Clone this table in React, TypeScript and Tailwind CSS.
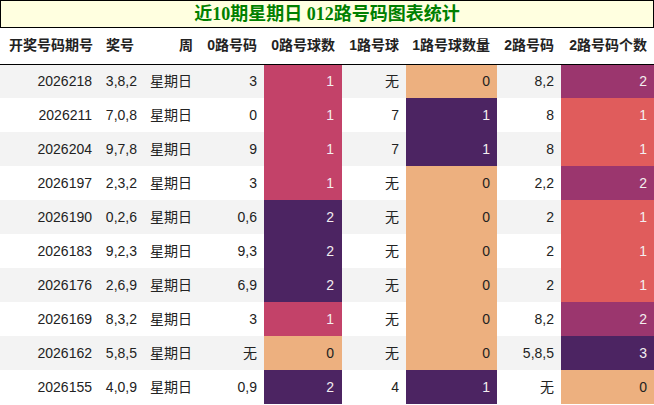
import React from 'react';

const C: Record<number, string> = {
  0: 'bg-[#edb07f] text-[#222]',
  1: 'bg-[#c34269] text-[#f3eef0]',
  2: 'bg-[#4c2462] text-[#f3eef0]',
  3: 'bg-[#4c2462] text-[#f3eef0]',
};
// 2路号码个数 uses a slightly different palette
const C2: Record<number, string> = {
  0: 'bg-[#edb07f] text-[#222]',
  1: 'bg-[#e05c5c] text-[#f3eef0]',
  2: 'bg-[#9b366e] text-[#f3eef0]',
  3: 'bg-[#4c2462] text-[#f3eef0]',
};
const C1: Record<number, string> = {
  0: 'bg-[#edb07f] text-[#222]',
  1: 'bg-[#4c2462] text-[#f3eef0]',
};

const rows: [string, string, string, string, number, string, number, string, number][] = [
  ['2026218', '3,8,2', '星期日', '3', 1, '无', 0, '8,2', 2],
  ['2026211', '7,0,8', '星期日', '0', 1, '7', 1, '8', 1],
  ['2026204', '9,7,8', '星期日', '9', 1, '7', 1, '8', 1],
  ['2026197', '2,3,2', '星期日', '3', 1, '无', 0, '2,2', 2],
  ['2026190', '0,2,6', '星期日', '0,6', 2, '无', 0, '2', 1],
  ['2026183', '9,2,3', '星期日', '9,3', 2, '无', 0, '2', 1],
  ['2026176', '2,6,9', '星期日', '6,9', 2, '无', 0, '2', 1],
  ['2026169', '8,3,2', '星期日', '3', 1, '无', 0, '8,2', 2],
  ['2026162', '5,8,5', '星期日', '无', 0, '无', 0, '5,8,5', 3],
  ['2026155', '4,0,9', '星期日', '0,9', 2, '4', 1, '无', 0],
];

const heads = ['开奖号码期号', '奖号', '周', '0路号码', '0路号球数', '1路号球', '1路号球数量', '2路号码', '2路号码个数'];
const widths = ['w-[100px]', 'w-[41px]', 'w-[59px]', 'w-[64px]', 'w-[78px]', 'w-[64px]', 'w-[91px]', 'w-[64px]', 'w-[93px]'];

export default function App() {
  return (
    <div className="w-[654px] h-[405px] bg-white overflow-hidden font-['Liberation_Sans','Noto_Sans_CJK_SC',sans-serif] text-[14px] text-[#222]">
      <div className="h-[28px] border border-black bg-[#ffffe0] flex items-center justify-center font-['Liberation_Serif','Noto_Sans_CJK_SC',serif] font-bold text-[18px] text-[#008000]">
        近10期星期日 012路号码图表统计
      </div>
      <table className="w-[654px] border-collapse table-fixed">
        <colgroup>
          {widths.map((w, i) => <col key={i} className={w} />)}
        </colgroup>
        <thead>
          <tr className="h-[36px] border-b border-black">
            {heads.map((h) => (
              <th key={h} className="text-right pr-[7px] font-bold whitespace-nowrap">{h}</th>
            ))}
          </tr>
        </thead>
        <tbody>
          {rows.map((r, i) => (
            <tr key={r[0]} className={`h-[34px] ${i % 2 === 0 ? 'bg-[#f3f3f3]' : 'bg-white'}`}>
              <td className="text-right pr-[8px]">{r[0]}</td>
              <td className="text-right pr-[4px]">{r[1]}</td>
              <td className="text-right pr-[8px]">{r[2]}</td>
              <td className="text-right pr-[7px]">{r[3]}</td>
              <td className={`text-right pr-[8px] ${C[r[4]]}`}>{r[4]}</td>
              <td className="text-right pr-[7px]">{r[5]}</td>
              <td className={`text-right pr-[7px] ${C1[r[6]]}`}>{r[6]}</td>
              <td className="text-right pr-[7px]">{r[7]}</td>
              <td className={`text-right pr-[7px] ${C2[r[8]]}`}>{r[8]}</td>
            </tr>
          ))}
        </tbody>
      </table>
    </div>
  );
}
